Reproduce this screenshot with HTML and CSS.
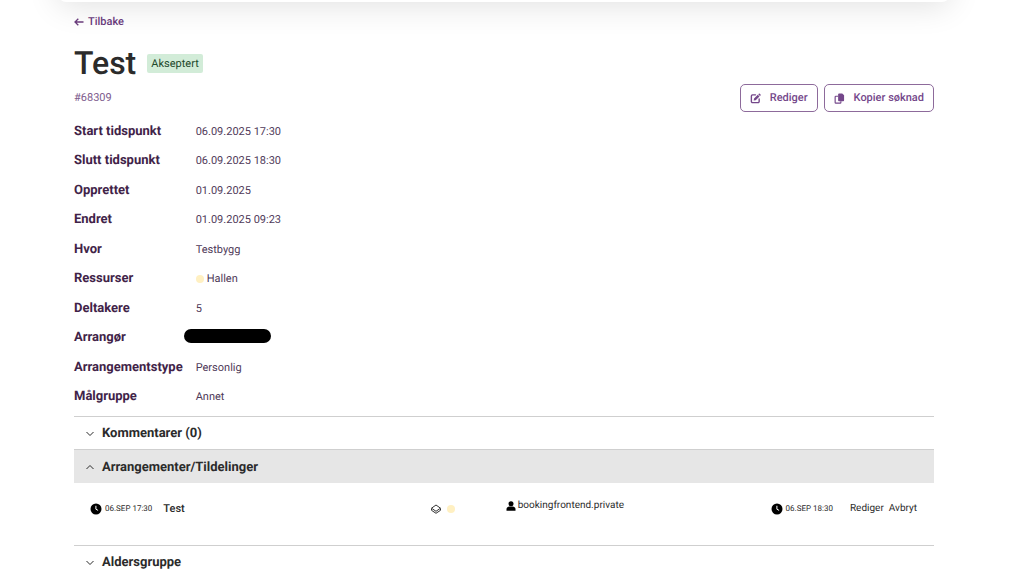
FILE: index.html
```html
<!DOCTYPE html>
<html lang="no">
<head>
<meta charset="utf-8">
<meta name="viewport" content="width=device-width, initial-scale=1">
<title>Test – søknad</title>
<link rel="stylesheet" href="styles.css">
</head>
<body>
<div class="topbar"></div>
<main class="page">
  <a class="back" href="#">
    <svg class="back-icon" viewBox="0 0 10 8" aria-hidden="true"><path d="M9.5 4H1M4.300 .7 1 4l3.300 3.300"/></svg>Tilbake</a>
  <div class="heading">
    <h1 class="title">Test</h1>
    <span class="badge">Akseptert</span>
  </div>
  <div class="toolbar">
    <span class="case-id">#68309</span>
    <div class="actions">
      <button class="button" type="button">
        <svg class="button-icon" viewBox="0 0 24 24" aria-hidden="true"><path fill="none" stroke="currentColor" stroke-width="3" stroke-linecap="round" d="M12 4H5.500A2.500 2.500 0 0 0 3 6.500v12A2.500 2.500 0 0 0 5.500 21h12a2.500 2.500 0 0 0 2.500-2.500V13"/><path fill="currentColor" d="M8 16.500l.8-4.500L17 3.800l3.700 3.700-8.200 8.200zM18 2.800l1.200-1.200a1.500 1.500 0 0 1 2.200 0l1.500 1.500a1.500 1.500 0 0 1 0 2.200l-1.200 1.200z"/></svg>Rediger</button>
      <button class="button" type="button">
        <svg class="button-icon" viewBox="0 0 24 24" aria-hidden="true"><path fill="currentColor" d="M11 1h7l4 4v11a2 2 0 0 1-2 2h-9a2 2 0 0 1-2-2V3a2 2 0 0 1 2-2z"/><path fill="none" stroke="currentColor" stroke-width="2.500" d="M9 7H4a1.500 1.500 0 0 0-1.500 1.500v12A1.500 1.500 0 0 0 4 22h9.500a1.500 1.500 0 0 0 1.500-1.500V18"/></svg>Kopier søknad</button>
    </div>
  </div>

  <dl class="details">
    <dt>Start tidspunkt</dt><dd>06.09.2025 17:30</dd>
    <dt>Slutt tidspunkt</dt><dd>06.09.2025 18:30</dd>
    <dt>Opprettet</dt><dd>01.09.2025</dd>
    <dt>Endret</dt><dd>01.09.2025 09:23</dd>
    <dt>Hvor</dt><dd>Testbygg</dd>
    <dt>Ressurser</dt><dd class="resource"><span class="dot"></span>Hallen</dd>
    <dt>Deltakere</dt><dd>5</dd>
    <dt>Arrangør</dt><dd><span class="redacted"></span></dd>
    <dt>Arrangementstype</dt><dd>Personlig</dd>
    <dt>Målgruppe</dt><dd>Annet</dd>
  </dl>

  <section class="accordion">
    <h2 class="accordion-title"><button class="accordion-button" type="button" aria-expanded="false"><svg class="chevron" viewBox="0 0 8 8" aria-hidden="true"><path d="M.5 2 4 5.500 7.500 2"/></svg>Kommentarer (0)</button></h2>
  </section>
  <section class="accordion">
    <h2 class="accordion-title"><button class="accordion-button is-open" type="button" aria-expanded="true"><svg class="chevron" viewBox="0 0 8 8" aria-hidden="true"><path d="M.5 5 4 1.500 7.500 5"/></svg>Arrangementer/Tildelinger</button></h2>
    <div class="event">
      <div class="event-main">
        <span class="time"><svg class="clock" viewBox="0 0 12 12" aria-hidden="true"><circle cx="6" cy="6" r="5.500"/><path d="M5.900 2.800v3.400l2.200 1.200"/></svg>06.SEP 17:30</span>
        <strong class="event-name">Test</strong>
      </div>
      <div class="event-resource">
        <svg class="layers" viewBox="0 0 12 12" aria-hidden="true"><path d="M6 2 10.500 5.200 6 8.300 1.500 5.200zM1.500 5.500v1.800L6 10.300l4.500-3V5.500"/></svg>
        <span class="dot"></span>
      </div>
      <div class="event-owner"><svg class="person" viewBox="0 0 10 10" aria-hidden="true"><circle cx="5" cy="2.700" r="2.500"/><path d="M.5 9.700V8C.5 6.700 2 5.800 3.300 5.600h3.400C8 5.800 9.500 6.700 9.500 8v1.700z"/></svg>bookingfrontend.private</div>
      <div class="event-end">
        <span class="time"><svg class="clock" viewBox="0 0 12 12" aria-hidden="true"><circle cx="6" cy="6" r="5.500"/><path d="M5.900 2.800v3.400l2.200 1.200"/></svg>06.SEP 18:30</span>
        <span class="event-links"><a href="#">Rediger</a><a href="#">Avbryt</a></span>
      </div>
    </div>
  </section>
  <section class="accordion">
    <h2 class="accordion-title"><button class="accordion-button" type="button" aria-expanded="false"><svg class="chevron" viewBox="0 0 8 8" aria-hidden="true"><path d="M.5 2 4 5.500 7.500 2"/></svg>Aldersgruppe</button></h2>
  </section>
</main>
</body>
</html>
```

FILE: styles.css
```css
* { box-sizing: border-box; }

html { overflow: hidden; }

body {
  margin: 0;
  background: #fff;
  color: #2b2b2b;
  font-family: Roboto, "Liberation Sans", sans-serif;
  font-size: 11px;
  line-height: 16px;
  text-rendering: geometricPrecision;
}

svg { flex: none; }

.topbar {
  height: 60px;
  margin: -58px 74px 0 58px;
  background: #fff;
  border-radius: 8px;
  box-shadow: 0 4px 32px rgba(0, 0, 0, 0.12);
}

.page { padding: 12px 90px 0 74px; }

.back {
  display: inline-flex;
  align-items: center;
  gap: 4px;
  color: #693b7b;
  font-weight: 500;
  text-decoration: none;
}

.back-icon {
  width: 10px;
  height: 8px;
  fill: none;
  stroke: currentColor;
  stroke-width: 1.3;
}

.heading {
  display: flex;
  align-items: center;
  gap: 11px;
  margin-top: 12px;
}

.title {
  margin: 0;
  font-size: 32px;
  line-height: 41px;
  font-weight: 500;
}

.badge {
  padding: 1px 4px;
  border-radius: 2px;
  background: #d2ecd8;
  color: #1f4a2c;
  line-height: 17px;
}

.toolbar {
  display: flex;
  align-items: center;
  justify-content: space-between;
}

.case-id { color: #7d5a8c; }

.actions {
  display: flex;
  gap: 6px;
}

.button {
  display: flex;
  align-items: center;
  gap: 9px;
  height: 28px;
  padding: 0 9px;
  border: 1px solid #8d6a9b;
  border-radius: 5px;
  background: #fff;
  color: #74478a;
  font: 500 11px/16px Roboto, "Liberation Sans", sans-serif;
  text-rendering: inherit;
}

.button-icon {
  width: 11px;
  height: 11px;
}

.details {
  display: grid;
  grid-template-columns: max-content 1fr;
  column-gap: 13px;
  align-content: space-between;
  min-height: 285px;
  margin: 10px 0 9px;
}

.details dt {
  color: #412348;
  font-size: 13px;
  line-height: 20px;
  font-weight: 700;
}

.details dd {
  margin: 0;
  color: #4f3a59;
  line-height: 20px;
}

.resource {
  display: flex;
  align-items: center;
  gap: 3px;
}

.dot {
  width: 8px;
  height: 8px;
  border-radius: 50%;
  background: #fff0c2;
}

.redacted {
  display: block;
  width: 87px;
  height: 14px;
  margin: 1px 0 0 -12px;
  border-radius: 7px;
  background: #000;
}

.accordion { border-top: 1px solid #cfcfcf; }

.accordion-title { margin: 0; }

.accordion-button {
  display: flex;
  align-items: center;
  gap: 8px;
  width: 100%;
  height: 32px;
  padding: 2px 12px 0;
  border: 0;
  background: #fff;
  color: #2b2b2b;
  font: 700 13px/20px Roboto, "Liberation Sans", sans-serif;
  text-rendering: inherit;
}

.accordion-button.is-open {
  height: 33px;
  background: #e6e6e6;
}

.chevron {
  width: 8px;
  height: 8px;
  fill: none;
  stroke: currentColor;
}

.event {
  display: grid;
  grid-template-columns: 340fr 76fr 265fr auto;
  align-items: center;
  padding: 15px 17px 25px 16px;
}

.event-main,
.event-resource,
.event-owner,
.event-end,
.time,
.event-links {
  display: flex;
  align-items: center;
}

.event-main { gap: 11px; }

.time {
  gap: 3px;
  font-size: 8px;
}

.clock {
  width: 12px;
  height: 12px;
}

.clock path {
  fill: none;
  stroke: #fff;
}

.event-name { font-weight: 500; }

.event-resource { gap: 5px; }

.layers {
  width: 12px;
  height: 12px;
  fill: none;
  stroke: #333;
}

.event-owner {
  gap: 2px;
  padding-bottom: 6px;
  font-size: 10px;
}

.person {
  width: 10px;
  height: 10px;
}

.event-end { gap: 17px; }

.event-links {
  gap: 5px;
  font-size: 10px;
}

.event-links a {
  color: inherit;
  text-decoration: none;
}
```
